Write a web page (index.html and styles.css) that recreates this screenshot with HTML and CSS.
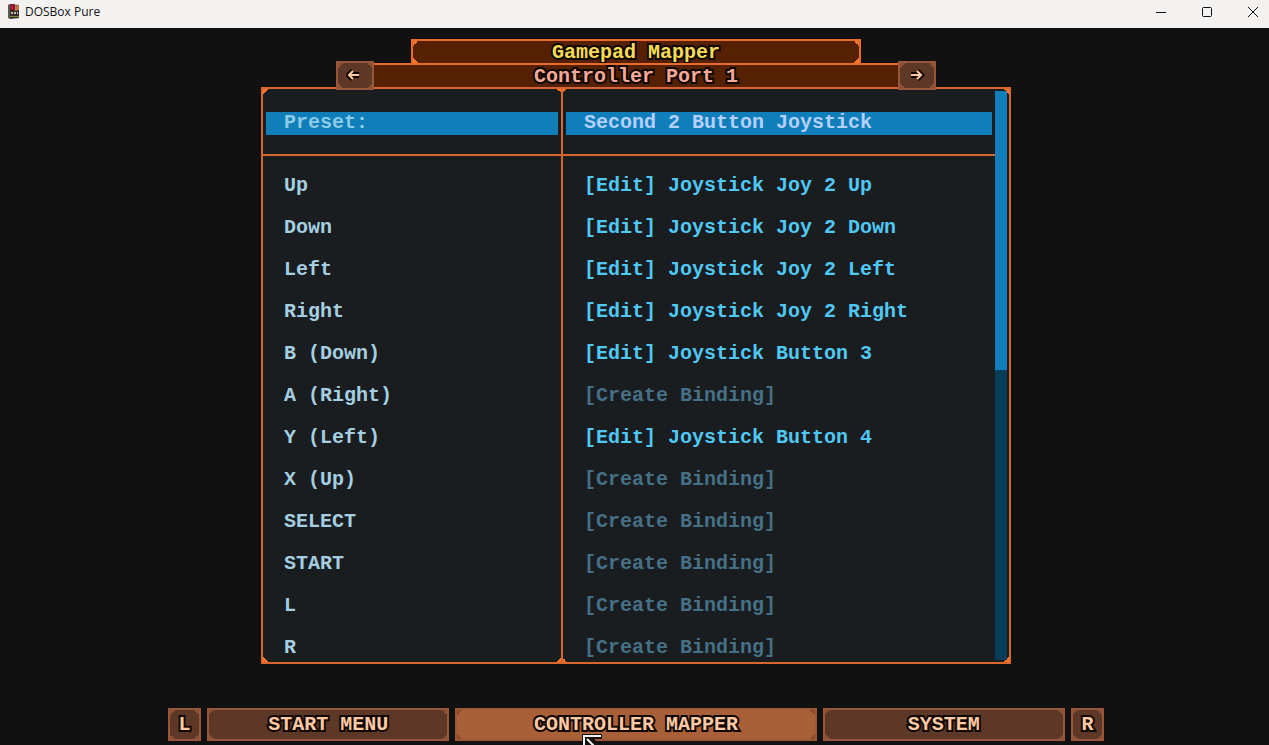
FILE: index.html
```html
<!DOCTYPE html>
<html lang="en">
<head>
<meta charset="utf-8">
<title>DOSBox Pure</title>
<link rel="stylesheet" href="styles.css">
</head>
<body>
<header class="titlebar">
  <svg class="app-icon" width="12" height="16" viewBox="0 0 12 16" aria-hidden="true">
    <path d="M0 1 2 0V15L0 14z" fill="#55604a"/>
    <path d="M2 0 11 1V14L2 15z" fill="#3a2a26"/>
    <path d="M2 0 7 .6V6H2z" fill="#8c1238"/>
    <path d="M7 1 11 1.500V6L7 7z" fill="#b5913a"/>
    <path d="M3 2 5 5M8 2 10 6" stroke="#c33a62" fill="none"/>
    <path d="M3 8h2v2H3zM6 8h2v2H6zM9 8h1v2H9z" fill="#c9b9b4"/>
    <path d="M2 12h9v1H2z" fill="#7c8b3b"/>
  </svg>
  <span class="app-name">DOSBox Pure</span>
  <div class="window-controls">
    <button type="button" aria-label="Minimize"><svg width="12" height="12" viewBox="0 0 12 12"><path d="M1 6.500h10"/></svg></button>
    <button type="button" aria-label="Maximize"><svg width="12" height="12" viewBox="0 0 12 12"><rect x="1.500" y="1.500" width="9" height="9" rx="1"/></svg></button>
    <button type="button" aria-label="Close"><svg width="12" height="12" viewBox="0 0 12 12"><path d="M1 1 11 11M11 1 1 11"/></svg></button>
  </div>
</header>
<main class="screen">
  <section class="mapper">
    <h1 class="heading framed">Gamepad Mapper</h1>
    <div class="port">
      <button class="button arrow" type="button" aria-label="Previous port">
        <svg width="18" height="16" viewBox="0 0 18 16"><path class="outline" d="M13 8H3M7 4 3 8 7 12"/><path d="M13 8H3M7 4 3 8 7 12"/></svg>
      </button>
      <h2 class="port-name">Controller Port 1</h2>
      <button class="button arrow" type="button" aria-label="Next port">
        <svg width="18" height="16" viewBox="0 0 18 16"><path class="outline" d="M3 8H13M9 4 13 8 9 12"/><path d="M3 8H13M9 4 13 8 9 12"/></svg>
      </button>
    </div>
    <div class="panel">
      <table class="bindings">
        <thead>
          <tr><th scope="row"><span class="selected">Preset:</span></th><td><button class="selected" type="button">Second 2 Button Joystick</button></td></tr>
        </thead>
        <tbody>
          <tr><th scope="row">Up</th><td><button type="button">[Edit] Joystick Joy 2 Up</button></td></tr>
          <tr><th scope="row">Down</th><td><button type="button">[Edit] Joystick Joy 2 Down</button></td></tr>
          <tr><th scope="row">Left</th><td><button type="button">[Edit] Joystick Joy 2 Left</button></td></tr>
          <tr><th scope="row">Right</th><td><button type="button">[Edit] Joystick Joy 2 Right</button></td></tr>
          <tr><th scope="row">B (Down)</th><td><button type="button">[Edit] Joystick Button 3</button></td></tr>
          <tr><th scope="row">A (Right)</th><td><button class="unbound" type="button">[Create Binding]</button></td></tr>
          <tr><th scope="row">Y (Left)</th><td><button type="button">[Edit] Joystick Button 4</button></td></tr>
          <tr><th scope="row">X (Up)</th><td><button class="unbound" type="button">[Create Binding]</button></td></tr>
          <tr><th scope="row">SELECT</th><td><button class="unbound" type="button">[Create Binding]</button></td></tr>
          <tr><th scope="row">START</th><td><button class="unbound" type="button">[Create Binding]</button></td></tr>
          <tr><th scope="row">L</th><td><button class="unbound" type="button">[Create Binding]</button></td></tr>
          <tr><th scope="row">R</th><td><button class="unbound" type="button">[Create Binding]</button></td></tr>
        </tbody>
      </table>
      <div class="scrollbar"><div class="thumb"></div></div>
    </div>
  </section>
  <nav class="tabs">
    <button class="button shoulder" type="button">L</button>
    <button class="button tab" type="button">START MENU</button>
    <button class="button tab current" type="button" aria-current="page">CONTROLLER MAPPER
      <svg class="pointer" width="26" height="26" viewBox="0 0 26 26" aria-hidden="true"><path class="body" d="M0 0H20V5H12L25 18V26H0z"/><path d="M2 26V2H19M5 5 23 23"/></svg>
    </button>
    <button class="button tab" type="button">SYSTEM</button>
    <button class="button shoulder" type="button">R</button>
  </nav>
</main>
</body>
</html>
```
FILE: styles.css
```css
* { box-sizing: border-box; }

body {
  margin: 0;
  height: 100vh;
  display: flex;
  flex-direction: column;
  overflow: hidden;
  background: #111;
  font: bold 20px/24px "Liberation Mono", monospace;
}

button {
  margin: 0;
  padding: 0;
  border: 0;
  background: none;
  color: inherit;
  font: inherit;
}

h1, h2 { margin: 0; font: inherit; }

.titlebar {
  flex: none;
  display: flex;
  align-items: center;
  height: 28px;
  padding: 0 0 4px 8px;
  gap: 5px;
  background: #f3f2f1;
  color: #111;
  font: 12px/16px "Open Sans", sans-serif;
}

.window-controls {
  display: flex;
  gap: 34px;
  margin-left: auto;
  padding-right: 10px;
}

.window-controls button {
  display: grid;
  place-items: center;
  height: 24px;
}

.window-controls svg { fill: none; stroke: #111; stroke-width: 1; }

.screen {
  flex: 1;
  min-height: 0;
  display: flex;
  flex-direction: column;
  align-items: center;
  gap: 44px;
  padding: 11px 0 4px 3px;
}

.mapper {
  flex: 1;
  min-height: 0;
  width: 100%;
  max-width: 750px;
  display: flex;
  flex-direction: column;
  align-items: center;
}

.framed, .button, .panel {
  --c: #f8742e;
  background-image:
    linear-gradient(135deg, var(--c) 50%, transparent 50%),
    linear-gradient(225deg, var(--c) 50%, transparent 50%),
    linear-gradient(45deg, var(--c) 50%, transparent 50%),
    linear-gradient(315deg, var(--c) 50%, transparent 50%);
  background-position: left top, right top, left bottom, right bottom;
  background-size: 5px 5px;
  background-repeat: no-repeat;
}

.heading, .port-name, .button {
  text-align: center;
  -webkit-text-stroke: 4px #100800;
  paint-order: stroke fill;
}

.heading {
  width: 60%;
  height: 24px;
  border: 2px solid #e96c2b;
  border-bottom: 0;
  background-color: #562103;
  color: #f8dc58;
}

.port {
  position: relative;
  z-index: 1;
  display: flex;
  align-items: center;
  width: 80%;
  height: 24px;
}

.port-name {
  flex: 1;
  height: 24px;
  border-top: 2px solid #e96c2b;
  background: #562103;
  color: #f8a898;
}

.heading, .port-name { line-height: 23px; }

.button {
  --c: #8c5034;
  border: 2px solid #98563a;
  background-color: #5d3826;
  color: #ffc9a5;
}

.arrow {
  display: grid;
  place-items: center;
  width: 38px;
  height: 29px;
}

.arrow svg { fill: none; stroke: #ffc9a5; stroke-width: 2; }
.arrow .outline { stroke: #100800; stroke-width: 6; }

.panel {
  --key: 300px;
  flex: 1;
  min-height: 0;
  width: 100%;
  display: flex;
  overflow: hidden;
  border: 2px solid #d9662d;
  background-color: #1a1d20;
  background-image:
    linear-gradient(135deg, var(--c) 50%, transparent 50%),
    linear-gradient(225deg, var(--c) 50%, transparent 50%),
    linear-gradient(45deg, var(--c) 50%, transparent 50%),
    linear-gradient(315deg, var(--c) 50%, transparent 50%),
    linear-gradient(225deg, var(--c) 50%, transparent 50%),
    linear-gradient(135deg, var(--c) 50%, transparent 50%),
    linear-gradient(315deg, var(--c) 50%, transparent 50%),
    linear-gradient(45deg, var(--c) 50%, transparent 50%);
  background-position:
    left top, right top, left bottom, right bottom,
    calc(var(--key) - 6px) top, calc(var(--key) - 1px) top,
    calc(var(--key) - 6px) bottom, calc(var(--key) - 1px) bottom;
}

.bindings {
  flex: 1;
  align-self: flex-start;
  table-layout: fixed;
  border-spacing: 0;
  text-align: left;
}

.bindings th { width: var(--key); border-right: 2px solid #d9662d; color: #a5cfe0; }
.bindings th, .bindings td { height: 42px; padding: 0 0 0 21px; font-weight: bold; white-space: nowrap; }
.bindings td { color: #50c8f4; }
.bindings td button { display: block; text-align: left; }
.bindings td .unbound { color: #467086; }

.bindings thead th, .bindings thead td {
  height: 67px;
  padding: 3px 3px 0;
  border-bottom: 2px solid #d9662d;
}

.bindings .selected {
  display: block;
  width: 100%;
  height: 23px;
  padding-left: 18px;
  background: #107eb9;
  color: #8ccbe6;
  line-height: 22px;
}

.bindings td .selected { color: #b4d0ff; }

.bindings tbody tr:first-child > * { height: 51px; padding-top: 9px; }

.scrollbar {
  flex: none;
  width: 12px;
  margin: 2px 2px 2px 0;
  background: #083d5a;
}

.thumb { height: 49%; background: #107eb9; }

.tabs {
  flex: none;
  display: flex;
  gap: 6px;
  width: 100%;
  max-width: 936px;
}

.tabs .button { height: 33px; line-height: 28px; }
.tabs .shoulder { flex: none; width: 33px; }
.tabs .tab { flex: 1 1 0; }

.tabs .current {
  --c: #8a4a2c;
  position: relative;
  flex-grow: 3;
  flex: 1.5 1 0;
  border-color: #9d5735;
  background-color: #a95f37;
}

.pointer {
  position: absolute;
  left: 35%;
  top: 24px;
  fill: none;
  stroke: #f2f2f2;
  stroke-width: 2;
}

.pointer .body { fill: #15100e; stroke: none; }
```
